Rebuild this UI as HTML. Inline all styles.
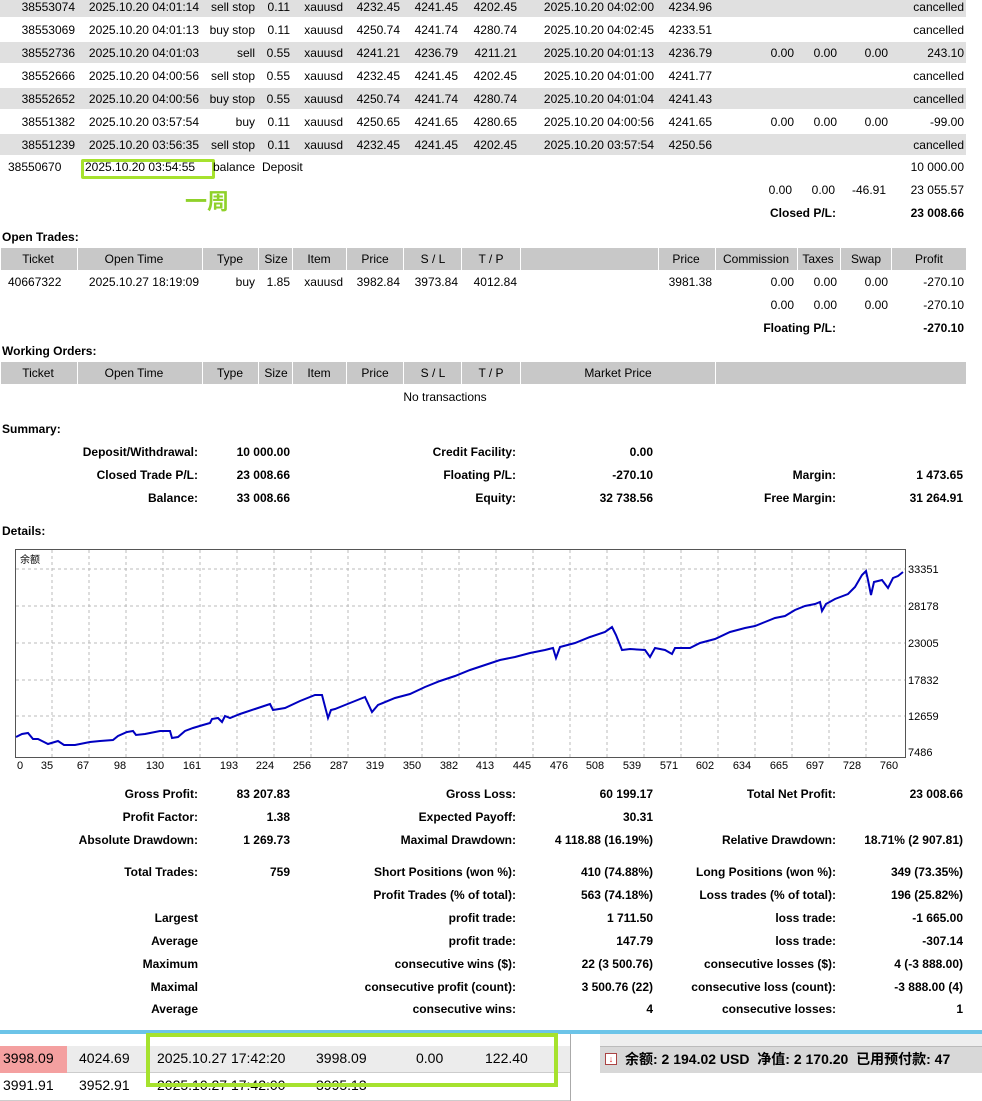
<!DOCTYPE html>
<html><head><meta charset="utf-8"><style>
*{margin:0;padding:0;box-sizing:border-box}
body{width:982px;height:1101px;background:#fff;position:relative;overflow:hidden;font-family:"Liberation Sans","Noto Sans CJK SC",sans-serif;font-size:12px;color:#000}
.a{position:absolute;white-space:nowrap;line-height:14px}
.r{text-align:right}
.c{text-align:center}
.b{font-weight:bold}
.bg{position:absolute;background:#e0e0e0}
.hd{position:absolute;background:#c8c8c8}
</style></head><body>

<!-- striped rows -->
<div class="bg" style="left:0;top:0;width:966px;height:17px"></div>
<div class="bg" style="left:0;top:42px;width:966px;height:21px"></div>
<div class="bg" style="left:0;top:88px;width:966px;height:21px"></div>
<div class="bg" style="left:0;top:134px;width:966px;height:21px"></div>

<div id="top"></div>

<div class="a b" style="left:2px;top:230px">Open Trades:</div>
<div class="hd" style="left:0;top:248px;width:966px;height:22px"></div>
<div class="a b" style="left:2px;top:344px">Working Orders:</div>
<div class="hd" style="left:0;top:362px;width:966px;height:22px"></div>

<div id="rest"></div>

<div class="a" style="left:185px;top:190px;font-size:22px;line-height:24px;font-weight:bold;color:#8fd12a">一周</div>
<div style="position:absolute;left:81px;top:159px;width:134px;height:20px;border:3px solid #a6e22e;border-radius:2px"></div>

<!-- chart -->
<svg style="position:absolute;left:0;top:540px" width="982" height="240">
<rect x="15.5" y="9.5" width="890" height="208" fill="#fff" stroke="#555"/>
<g stroke="#bbb" stroke-dasharray="3,3">
<line x1="16" x2="905" y1="29" y2="29"/><line x1="16" x2="905" y1="66" y2="66"/><line x1="16" x2="905" y1="103" y2="103"/><line x1="16" x2="905" y1="140" y2="140"/><line x1="16" x2="905" y1="176" y2="176"/>
<line x1="52" x2="52" y1="10" y2="217"/><line x1="89" x2="89" y1="10" y2="217"/><line x1="126" x2="126" y1="10" y2="217"/><line x1="163" x2="163" y1="10" y2="217"/><line x1="200" x2="200" y1="10" y2="217"/><line x1="237" x2="237" y1="10" y2="217"/><line x1="274" x2="274" y1="10" y2="217"/><line x1="311" x2="311" y1="10" y2="217"/><line x1="348" x2="348" y1="10" y2="217"/><line x1="385" x2="385" y1="10" y2="217"/><line x1="422" x2="422" y1="10" y2="217"/><line x1="459" x2="459" y1="10" y2="217"/><line x1="496" x2="496" y1="10" y2="217"/><line x1="533" x2="533" y1="10" y2="217"/><line x1="570" x2="570" y1="10" y2="217"/><line x1="607" x2="607" y1="10" y2="217"/><line x1="644" x2="644" y1="10" y2="217"/><line x1="681" x2="681" y1="10" y2="217"/><line x1="718" x2="718" y1="10" y2="217"/><line x1="755" x2="755" y1="10" y2="217"/><line x1="792" x2="792" y1="10" y2="217"/><line x1="829" x2="829" y1="10" y2="217"/><line x1="866" x2="866" y1="10" y2="217"/>
</g>
<polyline fill="none" stroke="#0000c0" stroke-width="2" points="16,197 22,194 28,193 33,199 38,199 44,202 48,204 58,201 64,205 75,205 90,202 100,201 113,200 118,196 127,192 133,191 136,195 145,194 150,193 160,191 170,191 172,198 178,197 185,191 193,188 203,185 210,183 212,179 218,178 222,182 225,176 230,178 240,174 255,169 270,164 273,170 285,168 300,161 315,155 322,155 328,178 331,170 335,169 345,165 360,159 365,157 372,172 378,165 395,158 410,154 425,147 440,141 455,136 470,130 485,125 500,120 515,117 530,113 545,110 553,108 556,118 560,107 575,103 590,97 605,92 612,87 616,95 622,110 630,109 645,110 650,117 655,108 665,110 672,114 675,108 690,108 700,103 715,99 730,92 745,88 755,86 765,82 775,78 785,76 795,70 805,66 815,64 820,62 822,71 826,64 835,59 848,54 855,47 862,35 866,31 868,40 871,55 874,42 882,40 888,48 893,38 898,36 903,32"/>
<text x="20" y="23" font-size="10" font-family="Liberation Sans,Noto Sans CJK SC,sans-serif">余额</text>
<g font-size="11" font-family="Liberation Sans,sans-serif">
<text x="908" y="33">33351</text><text x="908" y="70">28178</text><text x="908" y="107">23005</text><text x="908" y="144">17832</text><text x="908" y="180">12659</text><text x="908" y="216">7486</text>
</g>
<g font-size="11" font-family="Liberation Sans,sans-serif" text-anchor="middle">
<text x="20" y="229">0</text><text x="47" y="229">35</text><text x="83" y="229">67</text><text x="120" y="229">98</text><text x="155" y="229">130</text><text x="192" y="229">161</text><text x="229" y="229">193</text><text x="265" y="229">224</text><text x="302" y="229">256</text><text x="339" y="229">287</text><text x="375" y="229">319</text><text x="412" y="229">350</text><text x="449" y="229">382</text><text x="485" y="229">413</text><text x="522" y="229">445</text><text x="559" y="229">476</text><text x="595" y="229">508</text><text x="632" y="229">539</text><text x="669" y="229">571</text><text x="705" y="229">602</text><text x="742" y="229">634</text><text x="779" y="229">665</text><text x="815" y="229">697</text><text x="852" y="229">728</text><text x="889" y="229">760</text>
</g>
</svg>

<!-- bottom strip -->
<div style="position:absolute;left:0;top:1030px;width:982px;height:4px;background:#6cc4e8"></div>
<div style="position:absolute;left:0;top:1034px;width:570px;height:67px;background:#fff"></div>
<div style="position:absolute;left:0;top:1046px;width:570px;height:27px;background:#ececec;border-bottom:1px solid #ccc"></div>
<div style="position:absolute;left:0;top:1046px;width:67px;height:27px;background:#f4a0a0"></div>
<div style="position:absolute;left:0;top:1073px;width:570px;height:28px;background:#fff;border-bottom:1px solid #ccc"></div>
<div style="position:absolute;left:570px;top:1034px;width:412px;height:67px;background:#fff;border-left:1px solid #aaa"></div>
<div style="position:absolute;left:600px;top:1034px;width:382px;height:14px;background:#eee"></div>
<div style="position:absolute;left:600px;top:1046px;width:382px;height:27px;background:#d8d8d8;border-top:1px solid #bbb"></div>
<div class="a" style="left:605px;top:1053px;width:12px;height:12px;border:1px solid #a44;background:#fff;color:#d22;font-size:9px;line-height:10px;text-align:center">↓</div>
<div class="a b" style="left:625px;top:1051px;font-size:14px;line-height:16px">余额: 2 194.02 USD &nbsp;净值: 2 170.20 &nbsp;已用预付款: 47</div>
<div class="a" style="left:3px;top:1050px;font-size:14px;line-height:16px">3998.09</div>
<div class="a" style="left:79px;top:1050px;font-size:14px;line-height:16px">4024.69</div>
<div class="a" style="left:157px;top:1050px;font-size:14px;line-height:16px">2025.10.27 17:42:20</div>
<div class="a" style="left:316px;top:1050px;font-size:14px;line-height:16px">3998.09</div>
<div class="a" style="left:416px;top:1050px;font-size:14px;line-height:16px">0.00</div>
<div class="a" style="left:485px;top:1050px;font-size:14px;line-height:16px">122.40</div>
<div class="a" style="left:3px;top:1077px;font-size:14px;line-height:16px">3991.91</div>
<div class="a" style="left:79px;top:1077px;font-size:14px;line-height:16px">3952.91</div>
<div class="a" style="left:157px;top:1077px;font-size:14px;line-height:16px">2025.10.27 17:42:00</div>
<div class="a" style="left:316px;top:1077px;font-size:14px;line-height:16px">3995.13</div>
<div style="position:absolute;left:146px;top:1033px;width:412px;height:54px;border:4px solid #a6e22e"></div>

<script>
function t(x,y,s,o){o=o||{};var d=document.createElement('div');d.className='a'+(o.b?' b':'');d.textContent=s;
if(o.r){d.style.right=(982-x)+'px';}else{d.style.left=x+'px';}
if(o.c){d.style.left=(x-o.c/2)+'px';d.style.width=o.c+'px';d.style.textAlign='center';}
d.style.top=y+'px';document.body.appendChild(d);}
var rows=[
["38553074","2025.10.20 04:01:14","sell stop","0.11","xauusd","4232.45","4241.45","4202.45","2025.10.20 04:02:00","4234.96","","","","cancelled"],
["38553069","2025.10.20 04:01:13","buy stop","0.11","xauusd","4250.74","4241.74","4280.74","2025.10.20 04:02:45","4233.51","","","","cancelled"],
["38552736","2025.10.20 04:01:03","sell","0.55","xauusd","4241.21","4236.79","4211.21","2025.10.20 04:01:13","4236.79","0.00","0.00","0.00","243.10"],
["38552666","2025.10.20 04:00:56","sell stop","0.55","xauusd","4232.45","4241.45","4202.45","2025.10.20 04:01:00","4241.77","","","","cancelled"],
["38552652","2025.10.20 04:00:56","buy stop","0.55","xauusd","4250.74","4241.74","4280.74","2025.10.20 04:01:04","4241.43","","","","cancelled"],
["38551382","2025.10.20 03:57:54","buy","0.11","xauusd","4250.65","4241.65","4280.65","2025.10.20 04:00:56","4241.65","0.00","0.00","0.00","-99.00"],
["38551239","2025.10.20 03:56:35","sell stop","0.11","xauusd","4232.45","4241.45","4202.45","2025.10.20 03:57:54","4250.56","","","","cancelled"]];
var R=[75,199,255,290,343,400,458,517,654,712,794,837,888,964];
rows.forEach(function(r,i){var y=i*23;r.forEach(function(s,j){if(s)t(R[j],y,s,{r:1});});});
t(8,160,"38550670");t(85,160,"2025.10.20 03:54:55");t(213,160,"balance");t(262,160,"Deposit");t(964,160,"10 000.00",{r:1});
t(792,183,"0.00",{r:1});t(835,183,"0.00",{r:1});t(886,183,"-46.91",{r:1});t(964,183,"23 055.57",{r:1});
t(836,206,"Closed P/L:",{r:1,b:1});t(964,206,"23 008.66",{r:1,b:1});
// headers
var H=[[38,"Ticket"],[134,"Open Time"],[230,"Type"],[276,"Size"],[319,"Item"],[375,"Price"],[433,"S / L"],[491,"T / P"],[686,"Price"],[756,"Commission"],[818,"Taxes"],[866,"Swap"],[929,"Profit"]];
H.forEach(function(h){t(h[0],252,h[1],{c:90});});
var H2=[[38,"Ticket"],[134,"Open Time"],[230,"Type"],[276,"Size"],[319,"Item"],[375,"Price"],[433,"S / L"],[491,"T / P"],[618,"Market Price"]];
H2.forEach(function(h){t(h[0],366,h[1],{c:120});});
// header separators
[[0,77,202,258,292,346,403,461,520,658,715,797,840,891],[0,77,202,258,292,346,403,461,520,715]].forEach(function(a,k){a.forEach(function(x){var d=document.createElement('div');d.style.cssText='position:absolute;width:1px;height:22px;background:#fff;left:'+x+'px;top:'+(k?362:248)+'px';document.body.appendChild(d);});});
t(8,275,"40667322");t(199,275,"2025.10.27 18:19:09",{r:1});t(255,275,"buy",{r:1});t(290,275,"1.85",{r:1});t(343,275,"xauusd",{r:1});t(400,275,"3982.84",{r:1});t(458,275,"3973.84",{r:1});t(517,275,"4012.84",{r:1});t(712,275,"3981.38",{r:1});
[275,298].forEach(function(y){t(794,y,"0.00",{r:1});t(837,y,"0.00",{r:1});t(888,y,"0.00",{r:1});t(964,y,"-270.10",{r:1});});
t(836,321,"Floating P/L:",{r:1,b:1});t(964,321,"-270.10",{r:1,b:1});
t(445,390,"No transactions",{c:160});
t(2,422,"Summary:",{b:1});
var S=[[445,"Deposit/Withdrawal:","10 000.00","Credit Facility:","0.00","",""],[468,"Closed Trade P/L:","23 008.66","Floating P/L:","-270.10","Margin:","1 473.65"],[491,"Balance:","33 008.66","Equity:","32 738.56","Free Margin:","31 264.91"]];
S.forEach(function(s){t(198,s[0],s[1],{r:1,b:1});t(290,s[0],s[2],{r:1,b:1});t(516,s[0],s[3],{r:1,b:1});t(653,s[0],s[4],{r:1,b:1});if(s[5]){t(836,s[0],s[5],{r:1,b:1});t(963,s[0],s[6],{r:1,b:1});}});
t(2,524,"Details:",{b:1});
var D=[[787,"Gross Profit:","83 207.83","Gross Loss:","60 199.17","Total Net Profit:","23 008.66"],
[810,"Profit Factor:","1.38","Expected Payoff:","30.31","",""],
[833,"Absolute Drawdown:","1 269.73","Maximal Drawdown:","4 118.88 (16.19%)","Relative Drawdown:","18.71% (2 907.81)"],
[865,"Total Trades:","759","Short Positions (won %):","410 (74.88%)","Long Positions (won %):","349 (73.35%)"],
[888,"","","Profit Trades (% of total):","563 (74.18%)","Loss trades (% of total):","196 (25.82%)"],
[911,"Largest","","profit trade:","1 711.50","loss trade:","-1 665.00"],
[934,"Average","","profit trade:","147.79","loss trade:","-307.14"],
[957,"Maximum","","consecutive wins ($):","22 (3 500.76)","consecutive losses ($):","4 (-3 888.00)"],
[980,"Maximal","","consecutive profit (count):","3 500.76 (22)","consecutive loss (count):","-3 888.00 (4)"],
[1002,"Average","","consecutive wins:","4","consecutive losses:","1"]];
D.forEach(function(s){if(s[1])t(198,s[0],s[1],{r:1,b:1});if(s[2])t(290,s[0],s[2],{r:1,b:1});t(516,s[0],s[3],{r:1,b:1});t(653,s[0],s[4],{r:1,b:1});if(s[5]){t(836,s[0],s[5],{r:1,b:1});t(963,s[0],s[6],{r:1,b:1});}});
</script>
</body></html>
